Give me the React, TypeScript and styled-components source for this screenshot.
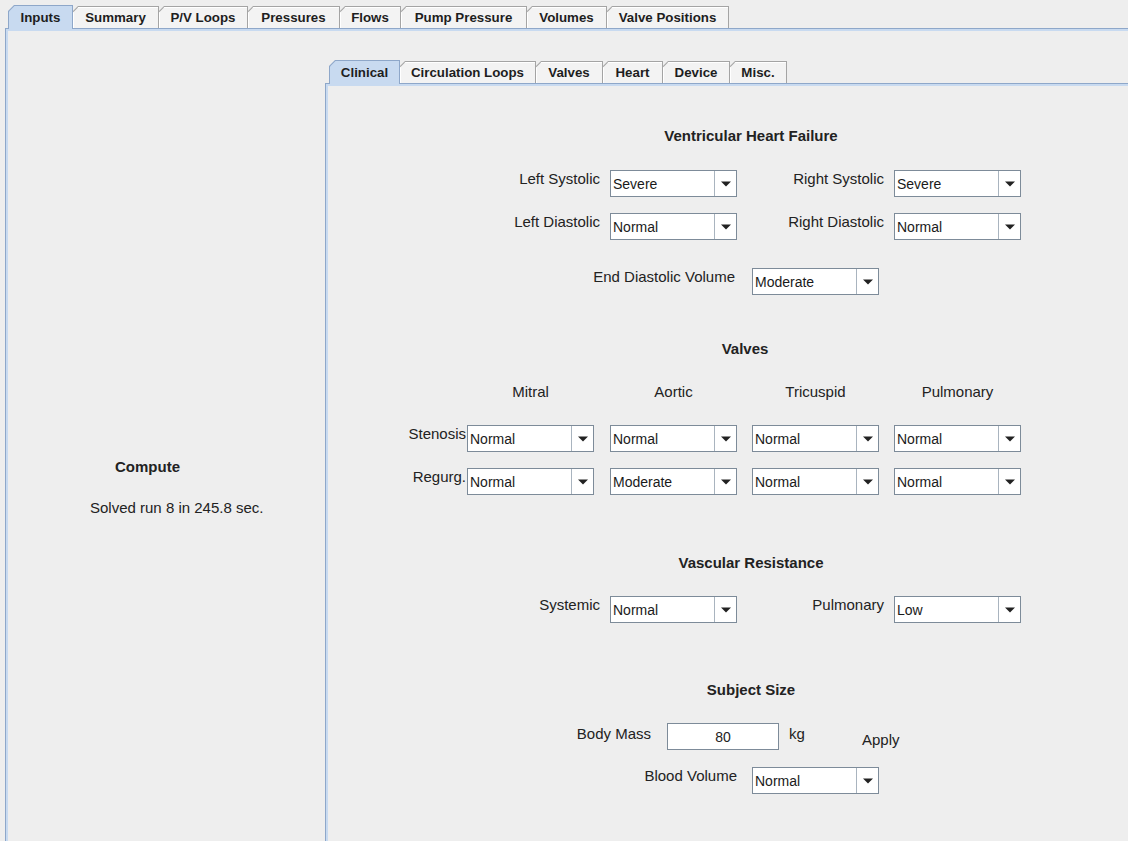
import React from "react";
import styled, { createGlobalStyle } from "styled-components";

const GlobalStyle = createGlobalStyle`
  html, body {
    margin: 0;
    padding: 0;
    background: #eeeeee;
  }
  body {
    font-family: "Liberation Sans", Arial, sans-serif;
    color: #222222;
    overflow: hidden;
  }
`;

// grid tracks of the clinical form: label | combo | gap | combo | gap | combo | gap | combo | filler
const COLS = "87px 127px 16px 127px 15px 127px 15px 127px 101px";

const Window = styled.div`
  width: 1128px;
  height: 841px;
  box-sizing: border-box;
  overflow: hidden;
  padding: 5px 0 0 5px;
  display: flex;
  flex-direction: column;
`;

const TabRow = styled.div<{ $inset: number }>`
  display: flex;
  align-items: flex-end;
  height: 23px;
  padding-left: ${(p) => p.$inset}px;
  position: relative;
  z-index: 1;
`;

const TabShape = styled.div<{ $w: number; $selected?: boolean }>`
  width: ${(p) => p.$w + 1}px;
  height: ${(p) => (p.$selected ? 24 : 22)}px;
  margin-right: -1px;
  margin-bottom: ${(p) => (p.$selected ? -1 : 0)}px;
  box-sizing: border-box;
  padding: 1px 1px 0 1px;
  background: ${(p) => (p.$selected ? "#8ea7c9" : "#a4a4a4")};
  clip-path: polygon(0 6px, 6px 0, 100% 0, 100% 100%, 0 100%);
  position: relative;
  z-index: ${(p) => (p.$selected ? 2 : 1)};
`;

const TabFace = styled.div<{ $selected?: boolean }>`
  height: 100%;
  background: ${(p) => (p.$selected ? "#c8daf0" : "#f3f3f3")};
  box-shadow: ${(p) => (p.$selected ? "none" : "inset 1px 1px 0 #ffffff")};
  clip-path: polygon(0 5.5px, 5.5px 0, 100% 0, 100% 100%, 0 100%);
  display: flex;
  align-items: center;
  justify-content: center;
  padding-bottom: ${(p) => (p.$selected ? 1 : 0)}px;
  box-sizing: border-box;
  font-size: 13.3px;
  font-weight: bold;
  color: #1e1e1e;
  white-space: nowrap;
`;

const Pane = styled.div`
  flex: 1;
  min-height: 0;
  display: flex;
  border-top: 1px solid #8ea7c9;
  border-left: 1px solid #8ea7c9;
  box-shadow: inset 2px 2px 0 #c8daf0;
`;

const SidePanel = styled.div`
  width: 319px;
  flex: none;
  display: flex;
  flex-direction: column;
  align-items: flex-start;
  padding-top: 429px;
  box-sizing: border-box;
`;

const ComputeButton = styled.div`
  margin-left: 109px;
  font-size: 15px;
  line-height: 17px;
  font-weight: bold;
`;

const Status = styled.div`
  margin-left: 84px;
  margin-top: 24px;
  font-size: 15px;
  line-height: 17px;
`;

const SubTabs = styled.div`
  flex: 1;
  display: flex;
  flex-direction: column;
  margin-top: 31px;
  min-width: 0;
`;

const Form = styled.div`
  width: 742px;
  padding: 43px 0 0 54px;
`;

const Heading = styled.div<{ $top: number; $shift?: number }>`
  margin-top: ${(p) => p.$top}px;
  padding-right: ${(p) => p.$shift ?? 0}px;
  text-align: center;
  font-size: 15px;
  line-height: 17px;
  font-weight: bold;
`;

const Row = styled.div<{ $top: number; $cols?: string }>`
  display: grid;
  grid-template-columns: ${(p) => p.$cols ?? COLS};
  margin-top: ${(p) => p.$top}px;
  align-items: start;
`;

type Align = "left" | "center" | "right";

const Label = styled.div<{ $span: string; $gap?: number; $align?: Align; $down?: number }>`
  grid-column: ${(p) => p.$span};
  text-align: ${(p) => p.$align ?? "right"};
  padding-right: ${(p) => p.$gap ?? 0}px;
  padding-top: ${(p) => p.$down ?? 0}px;
  font-size: 15px;
  line-height: 17px;
  white-space: nowrap;
`;

const Combo = styled.div<{ $col: number }>`
  grid-column: ${(p) => p.$col};
  height: 27px;
  box-sizing: border-box;
  border: 1px solid #7d8b99;
  background: #ffffff;
  display: flex;
`;

const ComboValue = styled.div`
  flex: 1;
  display: flex;
  align-items: center;
  padding-left: 2px;
  font-size: 14px;
  color: #1a1a1a;
`;

const ComboButton = styled.div`
  width: 21px;
  border-left: 1px solid #a9b4bf;
  display: flex;
  align-items: center;
  justify-content: center;
`;

const TextField = styled.div`
  grid-column: 3;
  height: 27px;
  box-sizing: border-box;
  border: 1px solid #7d8b99;
  background: #ffffff;
  display: flex;
  align-items: center;
  justify-content: center;
  font-size: 14px;
`;

const ApplyButton = styled.div`
  grid-column: 6;
  margin-top: 8px;
  font-size: 15px;
  line-height: 17px;
`;

type TabSpec = { label: string; w: number };

const mainTabs: TabSpec[] = [
  { label: "Inputs", w: 64 },
  { label: "Summary", w: 86 },
  { label: "P/V Loops", w: 89 },
  { label: "Pressures", w: 92 },
  { label: "Flows", w: 61 },
  { label: "Pump Pressure", w: 126 },
  { label: "Volumes", w: 80 },
  { label: "Valve Positions", w: 122 },
];

const inputTabs: TabSpec[] = [
  { label: "Clinical", w: 70 },
  { label: "Circulation Loops", w: 136 },
  { label: "Valves", w: 67 },
  { label: "Heart", w: 60 },
  { label: "Device", w: 67 },
  { label: "Misc.", w: 57 },
];

const Tabs: React.FC<{ tabs: TabSpec[]; selected: number; inset: number }> = ({
  tabs,
  selected,
  inset,
}) => (
  <TabRow $inset={inset}>
    {tabs.map((t, i) => (
      <TabShape key={t.label} $w={t.w} $selected={i === selected}>
        <TabFace $selected={i === selected}>{t.label}</TabFace>
      </TabShape>
    ))}
  </TabRow>
);

const Select: React.FC<{ col: number; value: string }> = ({ col, value }) => (
  <Combo $col={col}>
    <ComboValue>{value}</ComboValue>
    <ComboButton>
      <svg width="10" height="6" viewBox="0 0 10 6">
        <path d="M0 0.5 L10 0.5 L5 5.5 Z" fill="#222" />
      </svg>
    </ComboButton>
  </Combo>
);

export default function App() {
  return (
    <>
      <GlobalStyle />
      <Window>
        <Tabs tabs={mainTabs} selected={0} inset={3} />
        <Pane>
          <SidePanel>
            <ComputeButton>Compute</ComputeButton>
            <Status>Solved run 8 in 245.8 sec.</Status>
          </SidePanel>
          <SubTabs>
            <Tabs tabs={inputTabs} selected={0} inset={4} />
            <Pane>
              <Form>
                <Heading $top={0}>Ventricular Heart Failure</Heading>
                <Row $top={26}>
                  <Label $span="1 / 4" $gap={10}>Left Systolic</Label>
                  <Select col={4} value="Severe" />
                  <Label $span="5 / 8" $gap={10}>Right Systolic</Label>
                  <Select col={8} value="Severe" />
                </Row>
                <Row $top={16}>
                  <Label $span="1 / 4" $gap={10}>Left Diastolic</Label>
                  <Select col={4} value="Normal" />
                  <Label $span="5 / 8" $gap={10}>Right Diastolic</Label>
                  <Select col={8} value="Normal" />
                </Row>
                <Row $top={28}>
                  <Label $span="1 / 6" $gap={17}>End Diastolic Volume</Label>
                  <Select col={6} value="Moderate" />
                </Row>

                <Heading $top={45} $shift={12}>Valves</Heading>
                <Row $top={26}>
                  <Label $span="2" $align="center">Mitral</Label>
                  <Label $span="4" $align="center">Aortic</Label>
                  <Label $span="6" $align="center">Tricuspid</Label>
                  <Label $span="8" $align="center">Pulmonary</Label>
                </Row>
                <Row $top={25}>
                  <Label $span="1" $gap={1}>Stenosis</Label>
                  <Select col={2} value="Normal" />
                  <Select col={4} value="Normal" />
                  <Select col={6} value="Normal" />
                  <Select col={8} value="Normal" />
                </Row>
                <Row $top={16}>
                  <Label $span="1" $gap={1}>Regurg.</Label>
                  <Select col={2} value="Normal" />
                  <Select col={4} value="Moderate" />
                  <Select col={6} value="Normal" />
                  <Select col={8} value="Normal" />
                </Row>

                <Heading $top={59}>Vascular Resistance</Heading>
                <Row $top={25}>
                  <Label $span="1 / 4" $gap={10}>Systemic</Label>
                  <Select col={4} value="Normal" />
                  <Label $span="5 / 8" $gap={10}>Pulmonary</Label>
                  <Select col={8} value="Low" />
                </Row>

                <Heading $top={58}>Subject Size</Heading>
                <Row $top={25} $cols="271px 16px 112px 10px 73px auto">
                  <Label $span="1" $down={2}>Body Mass</Label>
                  <TextField>80</TextField>
                  <Label $span="5" $align="left" $down={2}>kg</Label>
                  <ApplyButton>Apply</ApplyButton>
                </Row>
                <Row $top={17}>
                  <Label $span="1 / 6" $gap={15}>Blood Volume</Label>
                  <Select col={6} value="Normal" />
                </Row>
              </Form>
            </Pane>
          </SubTabs>
        </Pane>
      </Window>
    </>
  );
}
